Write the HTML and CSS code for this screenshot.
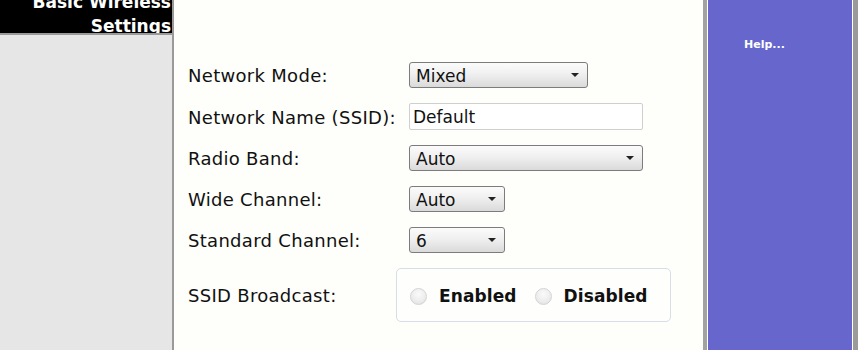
FILE: index.html
```html
<html lang="en">
<head>
    <meta charset="UTF-8">
    <meta name="viewport" content="width=device-width, initial-scale=1.0">
    <title>Basic Wireless Settings</title>
    <link rel="stylesheet" href="styles.css">
</head>
<body>
    <div id="page">
        <div class="sidebar">
            <div class="section-title">Basic Wireless<br>Settings</div>
        </div>

        <div class="content">
            <form class="settings">
                <label class="field-label" for="mode">Network Mode:</label>
                <span class="select-wrap mode"><select id="mode"><option>Mixed</option></select></span>

                <label class="field-label" for="ssid">Network Name (SSID):</label>
                <input class="text-field" id="ssid" type="text" value="Default">

                <label class="field-label" for="band">Radio Band:</label>
                <span class="select-wrap wide"><select id="band"><option>Auto</option></select></span>

                <label class="field-label" for="widech">Wide Channel:</label>
                <span class="select-wrap small"><select id="widech"><option>Auto</option></select></span>

                <label class="field-label" for="stdch">Standard Channel:</label>
                <span class="select-wrap small"><select id="stdch"><option>6</option></select></span>

                <span class="field-label">SSID Broadcast:</span>
                <div class="radio-box">
                    <label class="radio"><input type="radio" name="broadcast"><span>Enabled</span></label>
                    <label class="radio"><input type="radio" name="broadcast"><span>Disabled</span></label>
                </div>
            </form>
        </div>

        <div class="help">
            <a href="#" class="help-link">Help...</a>
        </div>
    </div>
</body>
</html>
```

FILE: styles.css
```css
*{
    box-sizing: border-box;
}
body{
    margin: 0;
    font-family: "DejaVu Sans", Verdana, sans-serif;
    background: #fefefa;
    overflow: hidden;
}
#page{
    display: flex;
    height: 350px;
}

/* left column */
.sidebar{
    width: 174px;
    background-color: #e6e6e6;
    border-right: 2px solid #9a9a9a;
}
.section-title{
    height: 35px;
    overflow: hidden;
    background-color: #000;
    border-bottom: 2px solid #9a9a9a;
    color: #fff;
    font-weight: bold;
    font-size: 17px;
    line-height: 24px;
    text-align: right;
    padding-right: 1px;
}
.section-title::before{
    content: "";
    display: block;
    margin-top: -10px;
}

/* form area */
.content{
    flex: 1;
    padding: 62px 0 0 14px;
}
.settings{
    display: grid;
    grid-template-columns: 221px auto;
    row-gap: 15px;
    align-items: center;
    justify-items: start;
    margin: 0;
}
.field-label{
    font-size: 18px;
    letter-spacing: 0.3px;
    color: #111;
    padding-top: 1px;
}

.select-wrap{
    position: relative;
    display: inline-block;
    height: 26px;
}
.select-wrap.mode{ width: 179px; }
.select-wrap.wide{ width: 234px; }
.select-wrap.small{ width: 96px; }
.select-wrap select{
    -webkit-appearance: none;
    appearance: none;
    width: 100%;
    height: 100%;
    margin: 0;
    padding: 1px 0 0 6px;
    font-family: "DejaVu Sans", Verdana, sans-serif;
    font-size: 17px;
    color: #111;
    border: 1px solid #7c7c7c;
    border-radius: 3px;
    background: linear-gradient(to bottom, #fbfbfb 0%, #f0f0f0 45%, #dadada 100%);
}
.select-wrap::after{
    content: "";
    position: absolute;
    right: 9px;
    top: 11px;
    border-left: 4px solid transparent;
    border-right: 4px solid transparent;
    border-top: 4px solid #222;
    pointer-events: none;
}

.text-field{
    width: 234px;
    height: 27px;
    margin: 0;
    padding: 1px 0 0 3px;
    font-family: "DejaVu Sans", Verdana, sans-serif;
    font-size: 17px;
    color: #111;
    background: #fff;
    border: 1px solid #cfcfcf;
    border-radius: 2px;
}

.radio-box{
    display: flex;
    align-items: center;
    width: 275px;
    height: 54px;
    margin-left: -13px;
    padding: 2px 0 0 13px;
    background: #fefefc;
    border: 1px solid #d6dee6;
    border-radius: 5px;
}
.radio{
    display: flex;
    align-items: center;
    margin-right: 18px;
    font-weight: bold;
    font-size: 17px;
    letter-spacing: 0.1px;
    color: #111;
}
.radio input{
    -webkit-appearance: none;
    appearance: none;
    width: 17px;
    height: 17px;
    margin: 0 12px 0 0;
    border: 1px solid #d4d4d4;
    border-radius: 50%;
    background: radial-gradient(circle at 50% 35%, #fafafa 0%, #ececec 60%, #dcdcdc 100%);
}

/* right help panel */
.help{
    width: 155px;
    background-color: #6666cc;
    border-left: 4px solid #a2a2a2;
    border-right: 5px solid #9a9a9a;
    box-shadow: inset 1px 0 #fff, inset -1px 0 #fff;
    padding: 38px 0 0 37px;
}
.help-link{
    color: #fff;
    font-size: 11px;
    font-weight: bold;
    text-decoration: none;
}
```
